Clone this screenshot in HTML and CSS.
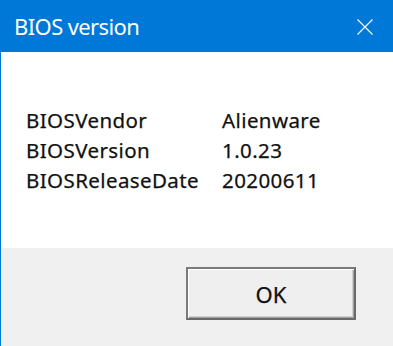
FILE: index.html
```html
<!DOCTYPE html>
<html lang="en">
<head>
  <meta charset="UTF-8">
  <meta name="viewport" content="width=device-width, initial-scale=1.0">
  <title>BIOS version</title>
  <link rel="stylesheet" href="styles.css">
</head>
<body>
  <div class="window">
    <div class="titlebar">
      <span class="title">BIOS version</span>
      <svg class="close" width="16" height="16" viewBox="0 0 16 16">
        <path d="M0.5 0.5 L15.5 15.5 M15.5 0.5 L0.5 15.5" stroke="#fff" stroke-width="1.1" fill="none"/>
      </svg>
    </div>

    <div class="content">
      <div class="info">
        <span>BIOSVendor</span><span>Alienware</span>
        <span>BIOSVersion</span><span>1.0.23</span>
        <span>BIOSReleaseDate</span><span>20200611</span>
      </div>
    </div>

    <div class="footer">
      <button class="ok-btn">OK</button>
    </div>
  </div>
</body>
</html>
```

FILE: styles.css
```css
body {
  margin: 0;
  font-family: "Noto Sans", "Open Sans", sans-serif;
  background-color: #fff;
}
.window {
  width: 393px;
  height: 346px;
  box-sizing: border-box;
  border-left: 1px solid #0078d7;
  display: flex;
  flex-direction: column;
}
.titlebar {
  height: 52px;
  flex: none;
  background-color: #0078d7;
  color: #fff;
  display: flex;
  align-items: center;
  padding: 0 20px 0 13px;
}
.title {
  font-size: 22px;
  line-height: 52px;
  letter-spacing: -0.6px;
  flex: 1;
}
.close {
  display: block;
  margin-top: 1px;
}
.content {
  height: 196px;
  flex: none;
  box-sizing: border-box;
  padding: 53px 0 0 25px;
  background-color: #fff;
}
.info {
  display: grid;
  grid-template-columns: 196px auto;
  font-size: 20.5px;
  line-height: 30px;
  letter-spacing: 0.4px;
  color: #111;
  -webkit-text-stroke: 0.25px #111;
}
.footer {
  flex: 1;
  background-color: #f0f0f0;
  display: flex;
  justify-content: flex-end;
  align-items: flex-start;
  padding: 19px 37px 0 0;
}
.ok-btn {
  width: 170px;
  height: 53px;
  box-sizing: border-box;
  font-family: "Noto Sans", "Open Sans", sans-serif;
  font-size: 22px;
  color: #111;
  -webkit-text-stroke: 0.25px #111;
  background-color: #efefef;
  border: 2px solid #7a7a7a;
  border-right-color: #6a6a6a;
  border-bottom-color: #6a6a6a;
  box-shadow: inset 1px 1px 0 #fff, inset -1px -1px 0 #a0a0a0, inset -2px -2px 0 #d0d0d0;
  padding: 0;
}
```
